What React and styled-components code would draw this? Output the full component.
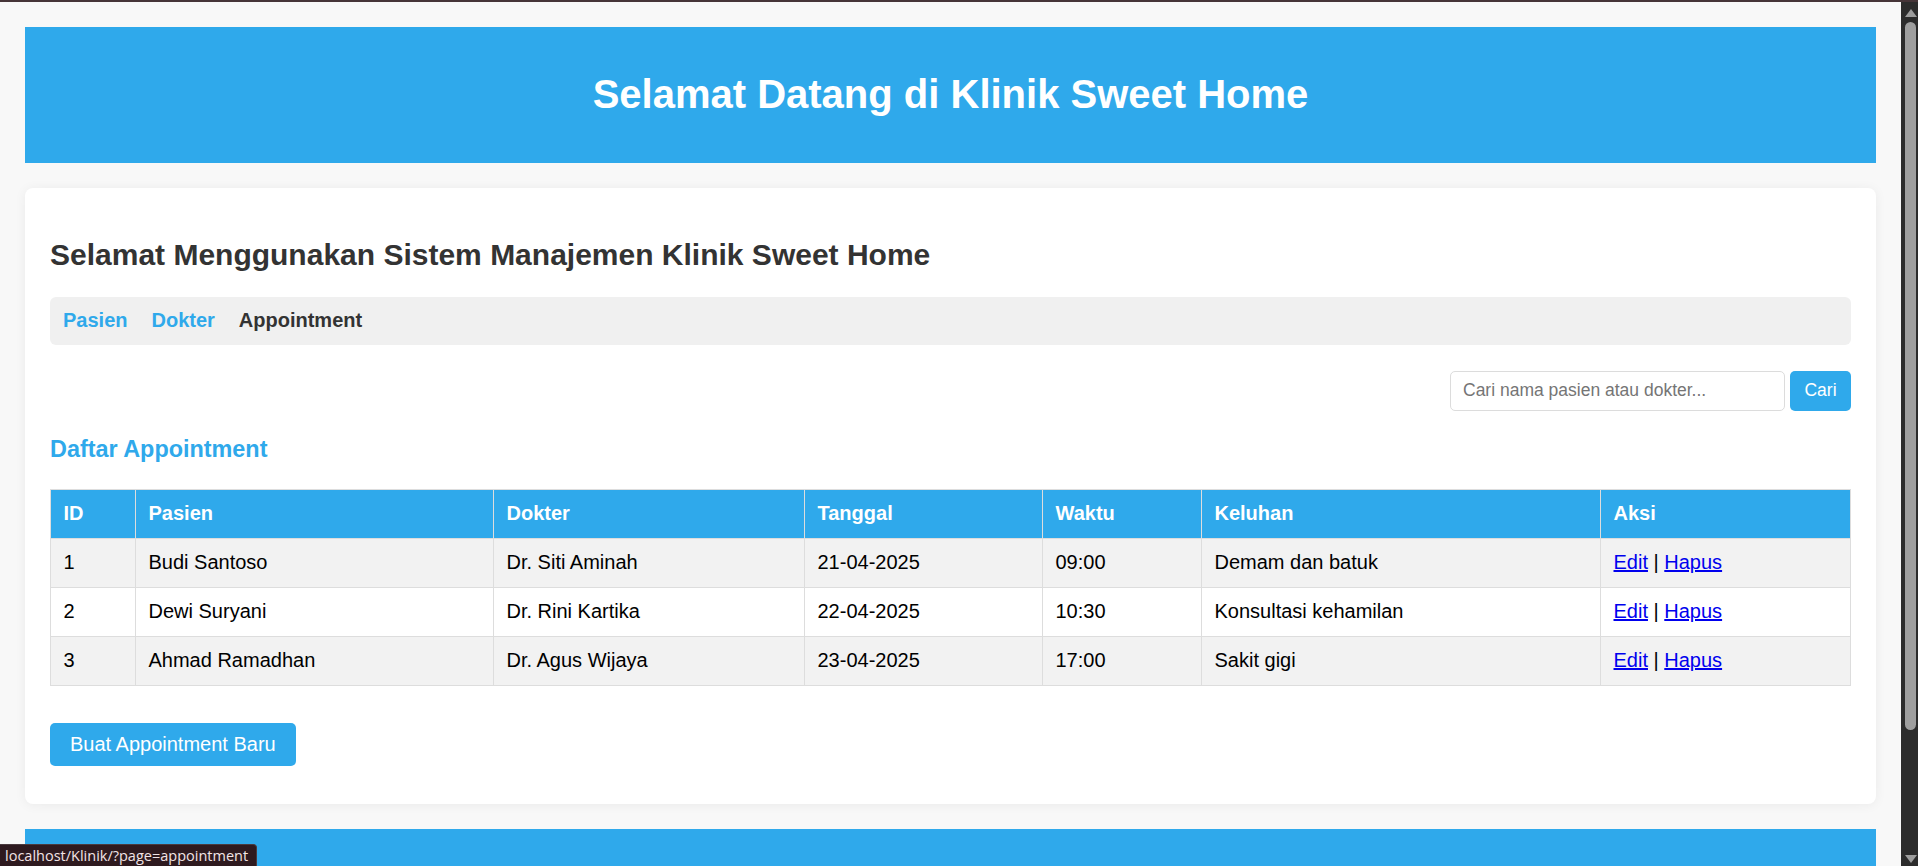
import React from "react";
import styled, { createGlobalStyle } from "styled-components";

const BLUE = "#2fa9eb";

const Global = createGlobalStyle`
  html, body {
    margin: 0;
    padding: 0;
    overflow: hidden;
    background: #f8f8f8;
  }
  body {
    font-family: "Liberation Sans", Arial, sans-serif;
  }
  * { box-sizing: border-box; }
`;

const Frame = styled.div`
  height: 866px;
  display: flex;
  flex-direction: column;
  overflow: hidden;
`;

const TopEdge = styled.div`
  height: 2px;
  flex: none;
  background: #463538;
`;

const Viewport = styled.div`
  flex: 1;
  min-height: 0;
  display: flex;
`;

const Page = styled.div`
  flex: 1;
  min-width: 0;
  overflow: hidden;
  background: #f8f8f8;
  padding: 25px;
`;

const Header = styled.header`
  background: ${BLUE};
  padding: 44px 0 46px;
  text-align: center;
`;

const SiteTitle = styled.h1`
  margin: 0;
  color: #fff;
  font-size: 40px;
  line-height: 46px;
  font-weight: 700;
`;

const Card = styled.main`
  margin-top: 25px;
  background: #fff;
  border-radius: 8px;
  box-shadow: 0 1px 12px rgba(0, 0, 0, 0.06);
  padding: 25px 25px 38px;
`;

const PageTitle = styled.h2`
  margin: 25px 0 24px;
  font-size: 30px;
  line-height: 34.5px;
  font-weight: 700;
  color: #333;
`;

const Nav = styled.nav`
  display: flex;
  gap: 24px;
  background: #f0f0f0;
  border-radius: 6px;
  padding: 12.5px 13px;
`;

const NavLink = styled.a`
  font-size: 20px;
  line-height: 23px;
  font-weight: 700;
  text-decoration: none;
  color: ${(p) => (p.$active ? "#333" : BLUE)};
  cursor: pointer;
`;

const SearchRow = styled.form`
  display: flex;
  justify-content: flex-end;
  gap: 5px;
  margin-top: 26px;
`;

const SearchInput = styled.input`
  width: 335px;
  height: 40px;
  border: 1px solid #dcdcdc;
  border-radius: 5px;
  padding: 0 12px;
  font-family: "Liberation Sans", Arial, sans-serif;
  font-size: 17.5px;
  color: #333;
  outline: none;
  &::placeholder {
    color: #757575;
  }
`;

const SearchButton = styled.button`
  width: 61px;
  height: 40px;
  border: none;
  border-radius: 5px;
  background: ${BLUE};
  color: #fff;
  font-family: "Liberation Sans", Arial, sans-serif;
  font-size: 17.5px;
  padding: 0;
  cursor: pointer;
`;

const SectionTitle = styled.h3`
  margin: 25px 0 26px;
  font-size: 23.4px;
  line-height: 27px;
  font-weight: 700;
  color: ${BLUE};
`;

const Table = styled.table`
  width: 100%;
  border-collapse: collapse;
  table-layout: fixed;
  border: 1px solid #ddd;
`;

const Col = styled.col`
  width: ${(p) => p.$w}px;
`;

const HeadCell = styled.th`
  background: ${BLUE};
  color: #fff;
  font-size: 20px;
  line-height: 23px;
  font-weight: 700;
  text-align: left;
  padding: 12.5px 12.5px;
  border: 1px solid #ddd;
`;

const Row = styled.tr`
  background: ${(p) => (p.$odd ? "#f2f2f2" : "#fff")};
`;

const Cell = styled.td`
  font-size: 20px;
  line-height: 23px;
  color: #000;
  padding: 12.5px 12.5px;
  border: 1px solid #ddd;
`;

const ActionLink = styled.a`
  color: #0000ee;
  text-decoration: underline;
  cursor: pointer;
`;

const Actions = styled.div`
  margin-top: 37px;
  display: flex;
`;

const PrimaryButton = styled.button`
  background: ${BLUE};
  color: #fff;
  border: none;
  border-radius: 5px;
  padding: 10px 20px;
  font-family: "Liberation Sans", Arial, sans-serif;
  font-size: 20px;
  line-height: 23px;
  cursor: pointer;
`;

const Footer = styled.footer`
  margin-top: 25px;
  height: 80px;
  background: ${BLUE};
`;

const ScrollTrack = styled.div`
  width: 17px;
  flex: none;
  background: #2c2c2c;
  display: flex;
  flex-direction: column;
  align-items: center;
  padding-top: 6px;
`;

const ArrowBox = styled.div`
  height: ${(p) => p.$h}px;
  display: flex;
  align-items: center;
  justify-content: center;
  padding-left: 2px;
`;

const Thumb = styled.div`
  width: 11px;
  height: 708px;
  margin-left: 4px;
  margin-right: 2px;
  align-self: flex-start;
  background: #9f9f9f;
  border-radius: 6px;
  margin-top: 5px;
`;

const Spacer = styled.div`
  flex: 1;
`;

const StatusBubble = styled.div`
  position: fixed;
  left: 0;
  bottom: 0;
  height: 22px;
  padding: 0 8px 0 5px;
  background: #2e1a1f;
  border-top: 1px solid #4a3a3e;
  border-right: 1px solid #4a3a3e;
  border-top-right-radius: 4px;
  color: #f2e4e6;
  font-family: "Open Sans", "Noto Sans", sans-serif;
  font-size: 14.5px;
  line-height: 22px;
  white-space: nowrap;
`;

const appointments = [
  { id: 1, pasien: "Budi Santoso", dokter: "Dr. Siti Aminah", tanggal: "21-04-2025", waktu: "09:00", keluhan: "Demam dan batuk" },
  { id: 2, pasien: "Dewi Suryani", dokter: "Dr. Rini Kartika", tanggal: "22-04-2025", waktu: "10:30", keluhan: "Konsultasi kehamilan" },
  { id: 3, pasien: "Ahmad Ramadhan", dokter: "Dr. Agus Wijaya", tanggal: "23-04-2025", waktu: "17:00", keluhan: "Sakit gigi" },
];

const columns = [
  { label: "ID", w: 85 },
  { label: "Pasien", w: 358 },
  { label: "Dokter", w: 311 },
  { label: "Tanggal", w: 238 },
  { label: "Waktu", w: 159 },
  { label: "Keluhan", w: 399 },
  { label: "Aksi", w: 250 },
];

function Arrow({ down }) {
  return (
    <svg width="12" height="8" viewBox="0 0 12 8">
      <polygon points={down ? "0,0 12,0 6,8" : "6,0 12,8 0,8"} fill="#9d9d9d" />
    </svg>
  );
}

export default function App() {
  return (
    <Frame>
      <Global />
      <TopEdge />
      <Viewport>
        <Page>
          <Header>
            <SiteTitle>Selamat Datang di Klinik Sweet Home</SiteTitle>
          </Header>
          <Card>
            <PageTitle>Selamat Menggunakan Sistem Manajemen Klinik Sweet Home</PageTitle>
            <Nav>
              <NavLink>Pasien</NavLink>
              <NavLink>Dokter</NavLink>
              <NavLink $active>Appointment</NavLink>
            </Nav>
            <SearchRow onSubmit={(e) => e.preventDefault()}>
              <SearchInput placeholder="Cari nama pasien atau dokter..." />
              <SearchButton type="submit">Cari</SearchButton>
            </SearchRow>
            <SectionTitle>Daftar Appointment</SectionTitle>
            <Table>
              <colgroup>
                {columns.map((c) => (
                  <Col key={c.label} $w={c.w} />
                ))}
              </colgroup>
              <thead>
                <tr>
                  {columns.map((c) => (
                    <HeadCell key={c.label}>{c.label}</HeadCell>
                  ))}
                </tr>
              </thead>
              <tbody>
                {appointments.map((a, i) => (
                  <Row key={a.id} $odd={i % 2 === 0}>
                    <Cell>{a.id}</Cell>
                    <Cell>{a.pasien}</Cell>
                    <Cell>{a.dokter}</Cell>
                    <Cell>{a.tanggal}</Cell>
                    <Cell>{a.waktu}</Cell>
                    <Cell>{a.keluhan}</Cell>
                    <Cell>
                      <ActionLink>Edit</ActionLink> | <ActionLink>Hapus</ActionLink>
                    </Cell>
                  </Row>
                ))}
              </tbody>
            </Table>
            <Actions>
              <PrimaryButton>Buat Appointment Baru</PrimaryButton>
            </Actions>
          </Card>
          <Footer />
        </Page>
        <ScrollTrack>
          <ArrowBox $h={9}>
            <Arrow />
          </ArrowBox>
          <Thumb />
          <Spacer />
          <ArrowBox $h={14}>
            <Arrow down />
          </ArrowBox>
        </ScrollTrack>
      </Viewport>
      <StatusBubble>localhost/Klinik/?page=appointment</StatusBubble>
    </Frame>
  );
}
